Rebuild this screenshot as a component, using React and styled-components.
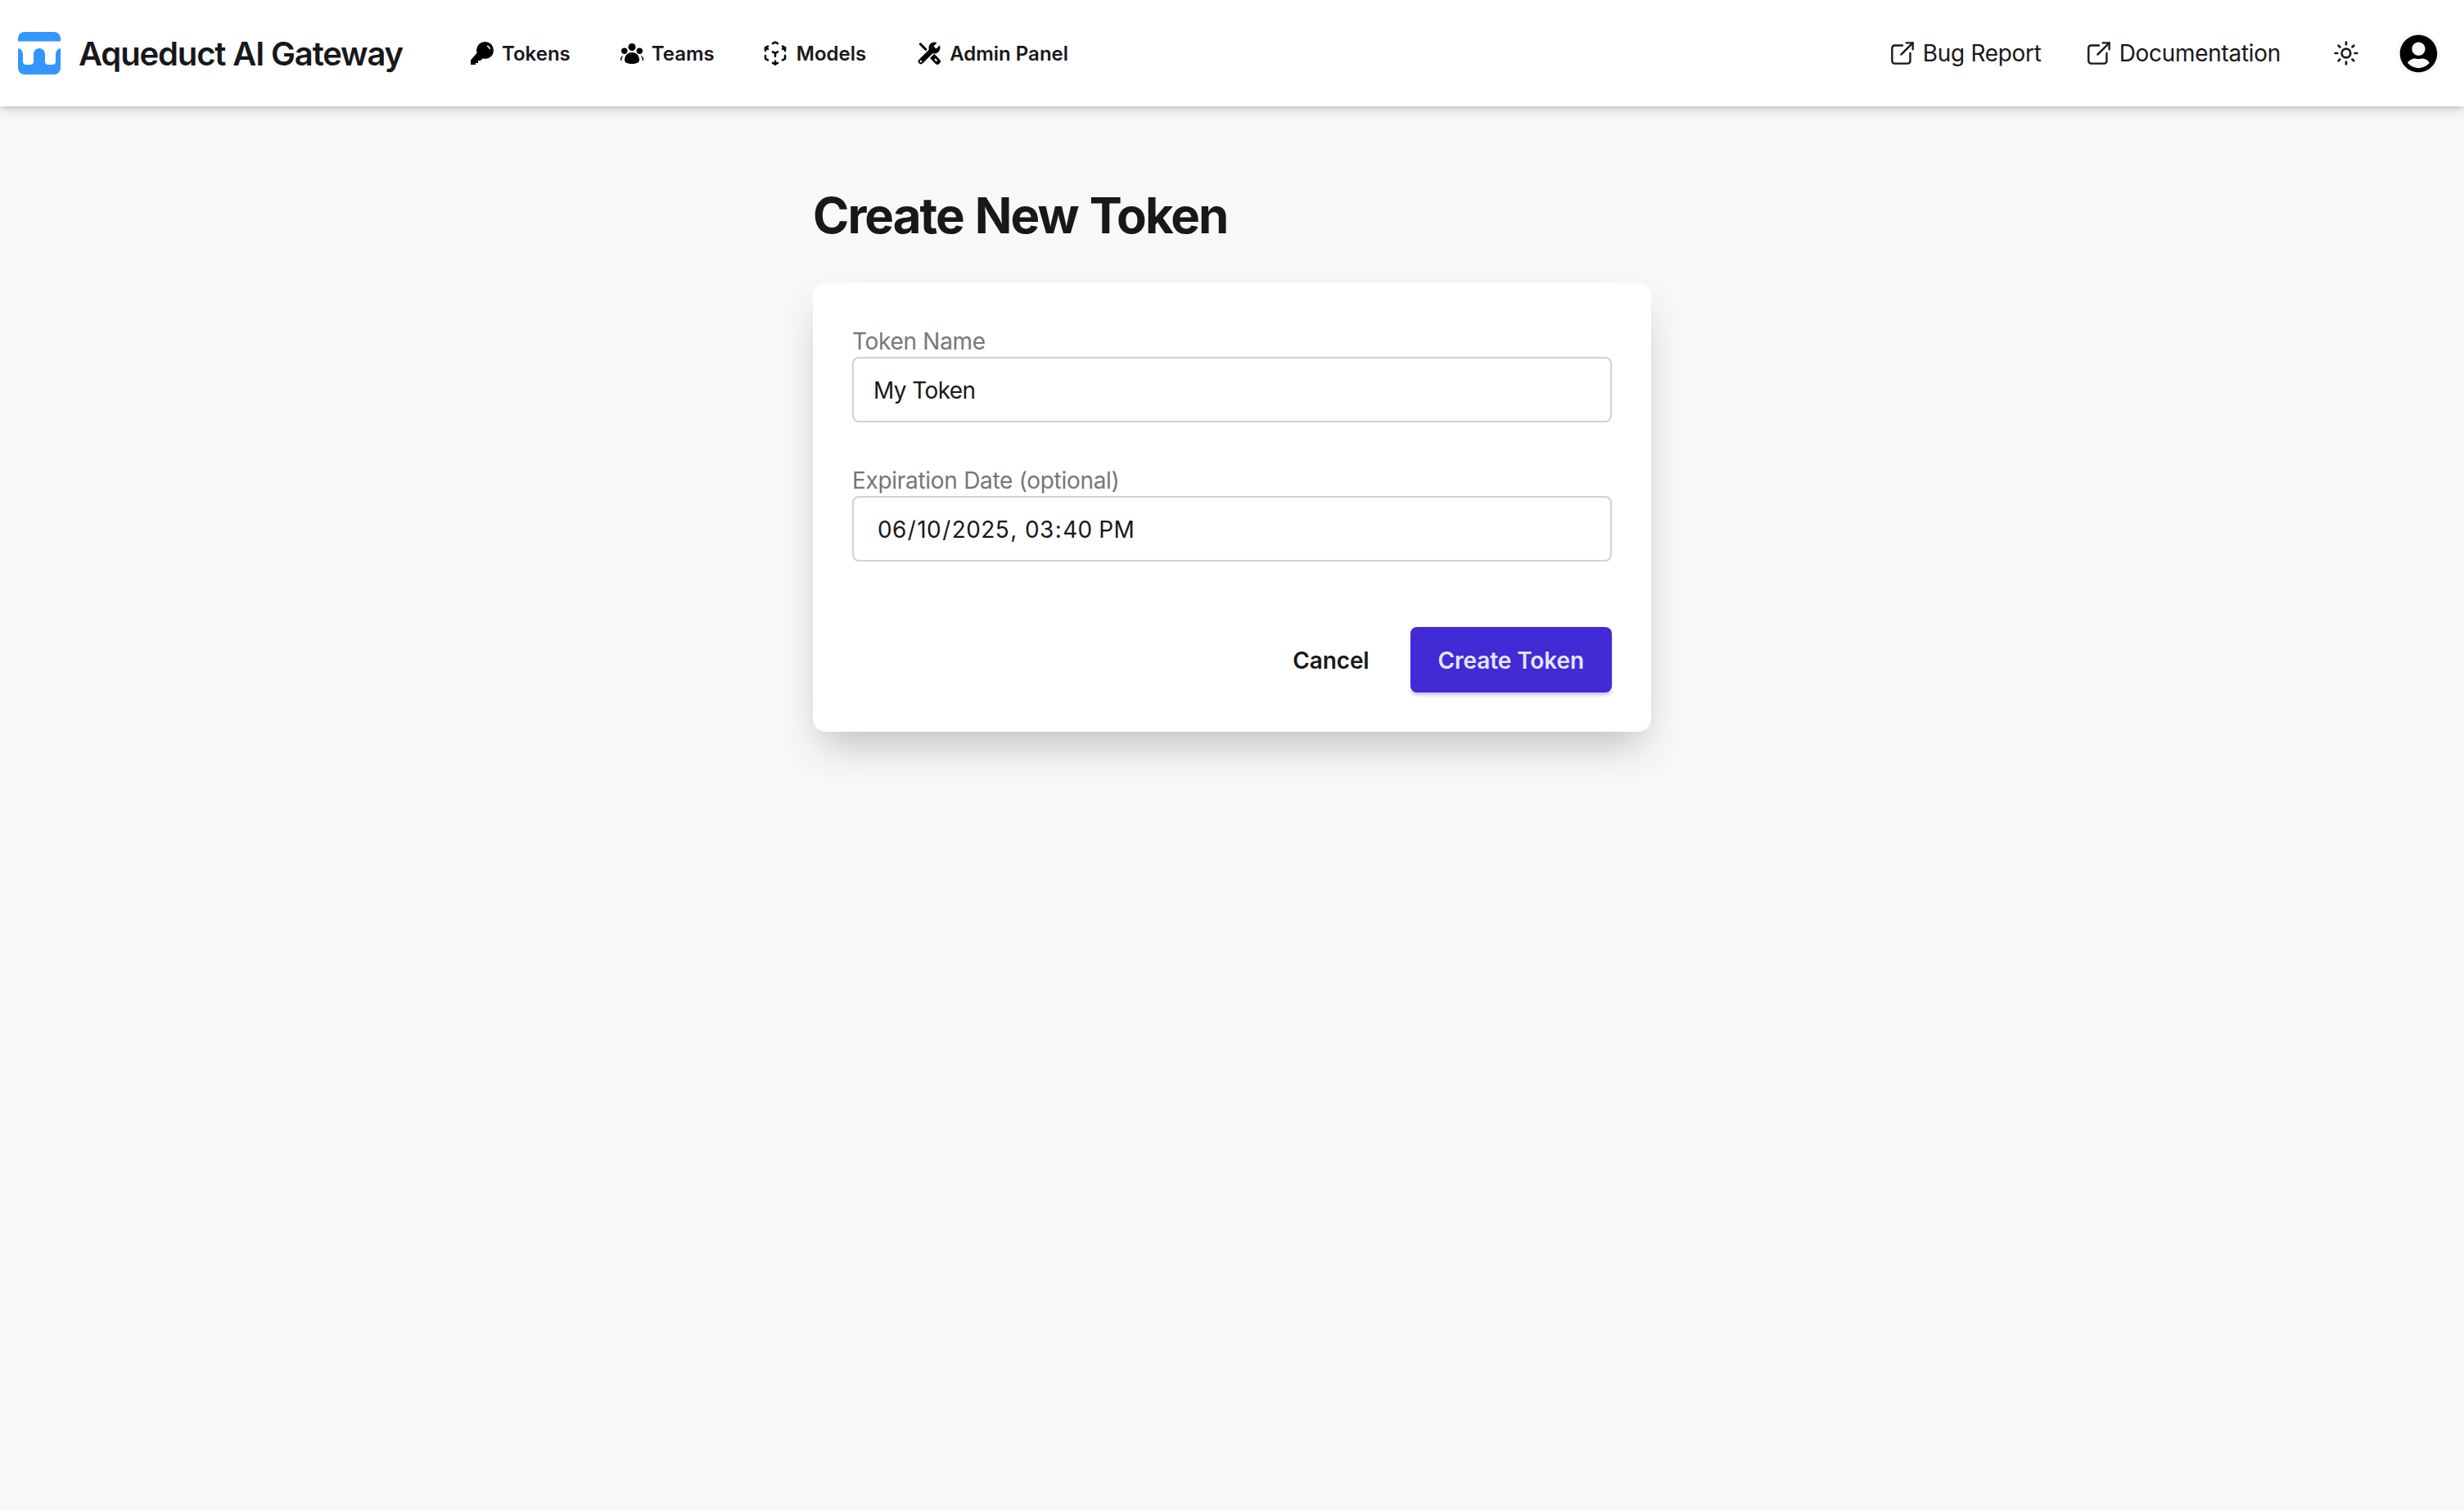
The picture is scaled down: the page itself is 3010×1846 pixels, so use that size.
import React from 'react'
import styled, { createGlobalStyle } from 'styled-components'
import { FaUserCircle } from 'react-icons/fa'
import { TbCube3dSphere, TbExternalLink } from 'react-icons/tb'
import { LuSun } from 'react-icons/lu'

const GlobalStyle = createGlobalStyle`
  html, body {
    margin: 0;
    background: #f8f8f8;
    color: #18181b;
    font-family: Inter, "Liberation Sans", sans-serif;
  }
  * {
    box-sizing: border-box;
  }
`

const Page = styled.div`
  min-height: 1846px;
  background: #f8f8f8;
`

const Navbar = styled.header`
  height: 130px;
  background: #fff;
  box-shadow: 0 4px 12px rgba(0, 0, 0, 0.16), 0 2px 4px rgba(0, 0, 0, 0.08);
  display: flex;
  align-items: center;
  justify-content: space-between;
  padding: 0 29px 0 22px;
`

const NavGroup = styled.div`
  display: flex;
  align-items: center;
`

const Brand = styled.a`
  display: flex;
  align-items: center;
  gap: 22px;
  font-size: 40px;
  font-weight: 600;
  letter-spacing: -1.15px;
  margin-right: 83px;
`

const MenuItem = styled.a`
  display: flex;
  align-items: center;
  gap: ${(p) => p.$gap || 10}px;
  font-size: 24px;
  font-weight: 600;
  margin-right: ${(p) => p.$after || 61}px;
  svg {
    color: #000;
    flex: none;
  }
`

const ModelsIcon = styled(TbCube3dSphere)`
  margin-left: -5px;
`

const LinkItem = styled.a`
  display: flex;
  align-items: center;
  gap: 6px;
  font-size: 28px;
  letter-spacing: -0.3px;
  margin-right: ${(p) => p.$after}px;
`

const ThemeToggle = styled.span`
  display: flex;
  color: #18181b;
  margin-right: 45px;
`

const Avatar = styled.span`
  width: 54px;
  height: 54px;
  border-radius: 50%;
  background: #f8f8f8;
  display: flex;
  align-items: center;
  justify-content: center;
  color: #000;
  font-size: 47px;
`

const Main = styled.main`
  width: 1024px;
  margin: 0 auto;
  padding-top: 97px;
`

const Heading = styled.h1`
  margin: 0 0 47px;
  font-size: 60px;
  line-height: 72px;
  font-weight: 750;
  letter-spacing: -2px;
  word-spacing: 2px;
`

const Card = styled.form`
  background: #fff;
  border-radius: 16px;
  padding: 48px;
  box-shadow: 0 25px 50px -12px rgba(0, 0, 0, 0.25);
`

const Field = styled.label`
  display: block;
  margin-bottom: 48px;
`

const LabelText = styled.span`
  display: block;
  font-size: 28px;
  line-height: 46px;
  height: 42px;
  letter-spacing: -0.3px;
  color: #767676;
`

const TextInput = styled.input`
  display: block;
  width: 100%;
  height: 80px;
  border: 2px solid #d1d1d1;
  border-radius: 8px;
  background: #fff;
  color: #18181b;
  padding: 2px 24px 0;
  font-family: inherit;
  font-size: 28px;
  letter-spacing: -0.6px;
  outline: none;
`

const DateInput = styled(TextInput)`
  padding-left: 28px;
  letter-spacing: 0.4px;
  &::-webkit-calendar-picker-indicator {
    display: none;
  }
`

const Actions = styled.div`
  display: flex;
  justify-content: flex-end;
  align-items: center;
  gap: 16px;
  margin-top: 80px;
`

const Button = styled.button`
  height: 80px;
  border: 0;
  border-radius: 8px;
  padding: 2px 34px 0;
  font-family: inherit;
  font-size: 28px;
  font-weight: 600;
  letter-spacing: -0.1px;
  color: ${(p) => (p.$primary ? '#e0e7ff' : '#18181b')};
  background: ${(p) => (p.$primary ? '#422ad5' : 'transparent')};
  box-shadow: ${(p) => (p.$primary ? '0 4px 4px -1px rgba(66, 42, 213, 0.3)' : 'none')};
`

const Logo = () => (
  <svg width="52" height="52" viewBox="0 0 52 52" fill="#3396ff">
    <path d="M0 11.5V8a8 8 0 0 1 8-8h36a8 8 0 0 1 8 8v3.5z" />
    <path d="M0 20Q5.5 21 6 27v9a4 4 0 0 0 4 4h5a4 4 0 0 0 4-4V27a7 7 0 0 1 14 0v9a4 4 0 0 0 4 4h5a4 4 0 0 0 4-4V27Q46.500 21 52 20v24a8 8 0 0 1-8 8H8a8 8 0 0 1-8-8z" />
  </svg>
)

const KeyIcon = () => (
  <svg width="28" height="28" viewBox="0 0 28 28" fill="currentColor">
    <circle cx="17.500" cy="10.500" r="10.500" />
    <path d="M10 11l7 7-5 5h-3v3H6v2H0v-5.500z" />
    <path d="M20 5a5 5 0 0 1 3.500 4" fill="none" stroke="#fff" strokeWidth="1.500" />
  </svg>
)

const TeamIcon = () => (
  <svg width="28" height="25" viewBox="0 0 28 25" fill="currentColor">
    <circle cx="14" cy="4.500" r="4.500" />
    <circle cx="4.700" cy="9.300" r="3.700" />
    <circle cx="23.300" cy="9.300" r="3.700" />
    <path d="M14 11c5.500 0 9 4 9 9.500 0 3-4 4.500-9 4.500s-9-1.500-9-4.500C5 15 8.500 11 14 11z" />
    <path d="M3.500 14.500C2 16.500 1 19 1.500 21.500l-1.500-1C-.500 18 1 15.500 3.500 14.500zM24.500 14.500c1.500 2 2.500 4.500 2 7l1.500-1c.5-2.500-1-5-3.500-6z" />
  </svg>
)

const ToolsIcon = () => (
  <svg width="28" height="28" viewBox="0 0 28 28" fill="none" stroke="currentColor">
    <path d="M2.500 2l9.500 9.500" strokeWidth="3" />
    <path d="M15 14.500l9 9.500" strokeWidth="7.500" strokeLinecap="round" />
    <path d="M21 21l2.500 2.500" stroke="#fff" strokeWidth="1.800" />
    <path d="M4 24L19 9" stroke="#fff" strokeWidth="10" />
    <path d="M4 24L19 9" strokeWidth="6.500" strokeLinecap="round" />
    <circle cx="20.500" cy="7.500" r="7" fill="currentColor" stroke="none" />
    <path d="M21 7l6.500-6.500" stroke="#fff" strokeWidth="4.500" />
    <circle cx="4" cy="24" r="1.300" fill="#fff" stroke="none" />
  </svg>
)

const App = () => (
  <Page>
    <GlobalStyle />
    <Navbar>
      <NavGroup>
        <Brand>
          <Logo />
          Aqueduct AI Gateway
        </Brand>
        <MenuItem><KeyIcon />Tokens</MenuItem>
        <MenuItem><TeamIcon />Teams</MenuItem>
        <MenuItem $gap={8} $after={63}><ModelsIcon size={36} strokeWidth={1.7} />Models</MenuItem>
        <MenuItem $gap={11}><ToolsIcon />Admin Panel</MenuItem>
      </NavGroup>
      <NavGroup>
        <LinkItem $after={51}><TbExternalLink size={38} strokeWidth={1.5} />Bug Report</LinkItem>
        <LinkItem $after={64}><TbExternalLink size={38} strokeWidth={1.5} />Documentation</LinkItem>
        <ThemeToggle><LuSun size={32} /></ThemeToggle>
        <Avatar><FaUserCircle /></Avatar>
      </NavGroup>
    </Navbar>
    <Main>
      <Heading>Create New Token</Heading>
      <Card>
        <Field>
          <LabelText>Token Name</LabelText>
          <TextInput type="text" defaultValue="My Token" />
        </Field>
        <Field>
          <LabelText>Expiration Date (optional)</LabelText>
          <DateInput type="datetime-local" defaultValue="2025-06-10T15:40" />
        </Field>
        <Actions>
          <Button type="button">Cancel</Button>
          <Button type="button" $primary>Create Token</Button>
        </Actions>
      </Card>
    </Main>
  </Page>
)

export default App
